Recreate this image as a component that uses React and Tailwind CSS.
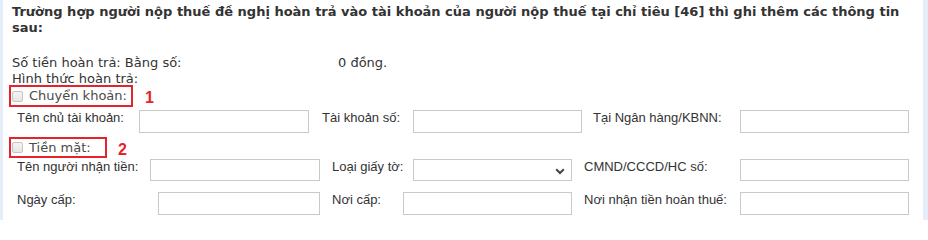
import React from 'react';

// small grey checkbox like the old IE-style one
const Check = () => (
  <span className="inline-block shrink-0 w-[11px] h-[11px] rounded-[2px] border border-[#c4c4c4] bg-gradient-to-b from-[#f4f4f4] to-[#e6e6e6]" />
);

const TextBox = ({ w, h = 'h-[23px]' }) => (
  <input type="text" className={`${w} ${h} shrink-0 border border-[#c9c9c9] bg-white outline-none`} />
);

const Label = ({ w, children, pl = '' }) => (
  <span className={`${w} ${pl} shrink-0 whitespace-nowrap text-[13px] leading-[15px] text-[#333]`}>{children}</span>
);

const Chevron = () => (
  <svg width="10" height="7" viewBox="0 0 10 7" className="absolute right-[6px] top-[8px]">
    <path d="M1.2 1.2 L5 5 L8.8 1.2" fill="none" stroke="#444" strokeWidth="2" />
  </svg>
);

export default function App() {
  return (
    <div className="w-[928px] h-[220px] overflow-hidden bg-white border-l-[3px] border-r-[5px] border-[#e3eef9]">
      <div className="pl-[9px] pt-[4px] font-['DejaVu_Sans',Verdana,sans-serif]">
        <p className="w-[900px] text-[13px] leading-[16px] font-bold text-[#333]">
          Trường hợp người nộp thuế đề nghị hoàn trả vào tài khoản của người nộp thuế tại chỉ tiêu [46] thì ghi thêm các thông tin sau:
        </p>

        <div className="mt-[19px] flex text-[13px] leading-[16px] text-[#333]">
          <span className="w-[326px]">Số tiền hoàn trả: Bằng số:</span>
          <span>0 đồng.</span>
        </div>
        <div className="text-[13px] leading-[16px] text-[#333]">Hình thức hoàn trả:</div>

        {/* Chuyển khoản */}
        <div className="mt-[-2px] flex items-center">
          <div className="ml-[-3px] w-[124px] h-[22px] border-2 border-[#e5232b] flex items-center pl-[1px] gap-[6px]">
            <Check />
            <span className="whitespace-nowrap text-[13px] leading-[16px] text-[#4a4a4a]">Chuyển khoản:</span>
          </div>
          <span className="ml-[12px] mt-[4px] font-['Liberation_Sans',Arial,sans-serif] font-bold text-[16px] leading-[16px] text-[#e5232b]">1</span>
        </div>

        <div className="mt-[3px] flex items-start font-['Liberation_Sans',Arial,sans-serif]">
          <Label w="w-[127px]" pl="pl-[5px]">Tên chủ tài khoản:</Label>
          <TextBox w="w-[170px]" />
          <Label w="w-[104px]" pl="pl-[13px]">Tài khoản số:</Label>
          <TextBox w="w-[169px]" />
          <Label w="w-[158px]" pl="pl-[11px]">Tại Ngân hàng/KBNN:</Label>
          <TextBox w="w-[169px]" />
        </div>

        {/* Tiền mặt */}
        <div className="mt-[4px] flex items-center">
          <div className="ml-[-3px] w-[98px] h-[21px] border-2 border-[#e5232b] flex items-center pl-[1px] gap-[6px]">
            <Check />
            <span className="whitespace-nowrap text-[13px] leading-[16px] text-[#4a4a4a]">Tiền mặt:</span>
          </div>
          <span className="ml-[11px] mt-[4px] font-['Liberation_Sans',Arial,sans-serif] font-bold text-[16px] leading-[16px] text-[#e5232b]">2</span>
        </div>

        <div className="mt-[1px] flex items-start font-['Liberation_Sans',Arial,sans-serif]">
          <Label w="w-[138px]" pl="pl-[5px]">Tên người nhận tiền:</Label>
          <TextBox w="w-[170px]" h="h-[22px]" />
          <Label w="w-[93px]" pl="pl-[12px]">Loại giấy tờ:</Label>
          <div className="relative shrink-0 w-[159px] h-[22px] border border-[#c9c9c9] bg-white">
            <Chevron />
          </div>
          <Label w="w-[168px]" pl="pl-[12px]">CMND/CCCD/HC số:</Label>
          <TextBox w="w-[169px]" h="h-[22px]" />
        </div>

        <div className="mt-[11px] flex items-start font-['Liberation_Sans',Arial,sans-serif]">
          <Label w="w-[146px]" pl="pl-[5px]">Ngày cấp:</Label>
          <TextBox w="w-[162px]" />
          <Label w="w-[83px]" pl="pl-[12px]">Nơi cấp:</Label>
          <TextBox w="w-[169px]" />
          <Label w="w-[168px]" pl="pl-[12px]">Nơi nhận tiền hoàn thuế:</Label>
          <TextBox w="w-[169px]" />
        </div>
      </div>
    </div>
  );
}
